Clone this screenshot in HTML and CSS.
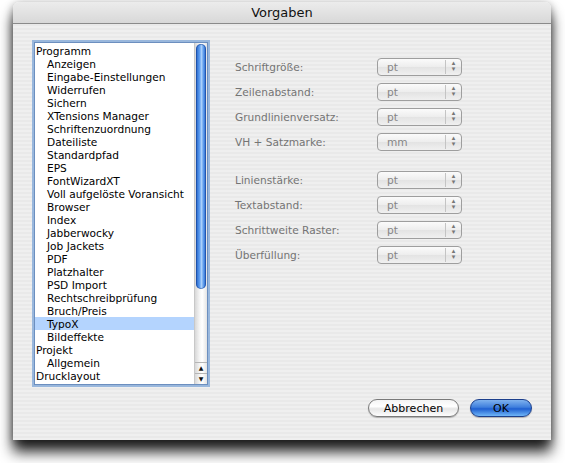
FILE: index.html
```html
<!DOCTYPE html>
<html lang="de">
<head>
  <meta charset="UTF-8" />
  <title>Vorgaben</title>
  <link rel="stylesheet" href="styles.css">
</head>
<body>
  <div class="window">
    <div class="titlebar">Vorgaben</div>
    <div class="content">
      <div class="main">
        <!-- Liste links -->
        <div class="listbox">
          <ul class="tree">
            <li>Programm</li>
            <li class="sub">Anzeigen</li>
            <li class="sub">Eingabe-Einstellungen</li>
            <li class="sub">Widerrufen</li>
            <li class="sub">Sichern</li>
            <li class="sub">XTensions Manager</li>
            <li class="sub">Schriftenzuordnung</li>
            <li class="sub">Dateiliste</li>
            <li class="sub">Standardpfad</li>
            <li class="sub">EPS</li>
            <li class="sub">FontWizardXT</li>
            <li class="sub">Voll aufgelöste Voransicht</li>
            <li class="sub">Browser</li>
            <li class="sub">Index</li>
            <li class="sub">Jabberwocky</li>
            <li class="sub">Job Jackets</li>
            <li class="sub">PDF</li>
            <li class="sub">Platzhalter</li>
            <li class="sub">PSD Import</li>
            <li class="sub">Rechtschreibprüfung</li>
            <li class="sub">Bruch/Preis</li>
            <li class="sub selected">TypoX</li>
            <li class="sub">Bildeffekte</li>
            <li>Projekt</li>
            <li class="sub">Allgemein</li>
            <li>Drucklayout</li>
          </ul>
          <div class="scrollbar">
            <div class="thumb"></div>
            <div class="track"></div>
            <div class="arrow">&#9650;</div>
            <div class="arrow">&#9660;</div>
          </div>
        </div>

        <!-- Einstellungen rechts -->
        <div class="panel">
          <div class="group">
            <div class="row"><span class="label">Schriftgröße:</span><span class="popup">pt</span></div>
            <div class="row"><span class="label">Zeilenabstand:</span><span class="popup">pt</span></div>
            <div class="row"><span class="label">Grundlinienversatz:</span><span class="popup">pt</span></div>
            <div class="row"><span class="label">VH + Satzmarke:</span><span class="popup">mm</span></div>
          </div>
          <div class="group">
            <div class="row"><span class="label">Linienstärke:</span><span class="popup">pt</span></div>
            <div class="row"><span class="label">Textabstand:</span><span class="popup">pt</span></div>
            <div class="row"><span class="label">Schrittweite Raster:</span><span class="popup">pt</span></div>
            <div class="row"><span class="label">Überfüllung:</span><span class="popup">pt</span></div>
          </div>
        </div>
      </div>

      <div class="buttons">
        <button class="btn">Abbrechen</button>
        <button class="btn default">OK</button>
      </div>
    </div>
  </div>
</body>
</html>
```

FILE: styles.css
```css
body {
  margin: 0;
  padding-bottom: 30px;
  background: #fff;
  font-family: 'DejaVu Sans', sans-serif;
  font-size: 10.6px;
  color: #000;
}

.window {
  margin: 2px 0 0 13px;
  width: 538px;
  height: 438px;
  border-radius: 6px 6px 0 0;
  background: repeating-linear-gradient(#efefef 0 2px, #e9e9e9 2px 4px);
  box-shadow: 0 12px 14px rgba(0,0,0,0.85), 0 2px 8px rgba(0,0,0,0.4);
  display: flex;
  flex-direction: column;
}

.titlebar {
  height: 21px;
  line-height: 21px;
  text-align: center;
  font-size: 13px;
  color: #111;
  border-radius: 6px 6px 0 0;
  background: linear-gradient(#ececec, #d8d8d8);
  border-bottom: 1px solid #8a8a8a;
}

.content {
  flex: 1;
  display: flex;
  flex-direction: column;
  padding: 18px 19px 0 21px;
}

.main {
  display: flex;
}

/* Liste */
.listbox {
  width: 172px;
  height: 341px;
  display: flex;
  background: #fff;
  border: 1px solid #6c8fbf;
  box-shadow: 0 0 0 2px rgba(125,165,215,0.75);
}
.tree {
  flex: 1;
  list-style: none;
  margin: 0;
  padding: 1px 0 0 0;
}
.tree li {
  height: 13px;
  line-height: 15px;
  padding-left: 1px;
  white-space: nowrap;
}
.tree li.sub {
  padding-left: 12px;
}
.tree li.selected {
  background: #b4d4fe;
}

/* Scrollbalken */
.scrollbar {
  width: 12px;
  display: flex;
  flex-direction: column;
  border-left: 1px solid #c8c8c8;
  background: linear-gradient(90deg, #d8d8d8, #f6f6f6 40%, #fff 60%, #e4e4e4);
}
.thumb {
  height: 245px;
  margin: 1px 1px 0 1px;
  border-radius: 5px;
  background: linear-gradient(90deg, #1f5fc4, #5c9cf0 35%, #a9d0fb 55%, #4d8ee6 80%, #2a66c8);
  box-shadow: inset 0 0 0 1px rgba(20,60,140,0.5);
}
.track {
  flex: 1;
}
.arrow {
  height: 10px;
  line-height: 10px;
  font-size: 6px;
  text-align: center;
  border-top: 1px solid #b5b5b5;
  color: #111;
}

/* Panel rechts */
.panel {
  margin-left: 27px;
  padding-top: 16px;
}
.group + .group {
  margin-top: 13px;
}
.row {
  height: 25px;
  display: flex;
  align-items: flex-start;
}
.label {
  width: 142px;
  line-height: 18px;
  color: #747474;
}
.popup {
  position: relative;
  box-sizing: border-box;
  width: 85px;
  height: 18px;
  line-height: 16px;
  padding-left: 9px;
  border: 1px solid #9e9e9e;
  border-radius: 4px;
  background: linear-gradient(#fbfbfb, #ededed 50%, #e3e3e3 51%, #f0f0f0);
  color: #858585;
}
/* Pfeile */
.popup::before {
  content: "\25B4\A\25BE";
  white-space: pre;
  position: absolute;
  right: 0; top: 1px;
  width: 15px;
  height: 14px;
  font-size: 7px;
  line-height: 6px;
  text-align: center;
  color: #777;
  border-left: 1px solid #c4c4c4;
}

/* Knöpfe */
.buttons {
  display: flex;
  justify-content: flex-end;
  gap: 11px;
  margin-top: 14px;
}
.btn {
  width: 91px;
  height: 18px;
  padding: 0;
  border-radius: 9px;
  font-family: 'DejaVu Sans', sans-serif;
  font-size: 11px;
  color: #000;
  border: 1px solid #7a7a7a;
  background: linear-gradient(#f4f4f4, #fff 40%, #e6e6e6 55%, #fdfdfd);
  box-shadow: 0 1px 1px rgba(0,0,0,0.25);
}
.btn.default {
  width: 62px;
  border-color: #1c3f8c;
  background: linear-gradient(#7fb2ee, #3f7fdd 45%, #1f5fd0 55%, #6fb6f8);
}
```
